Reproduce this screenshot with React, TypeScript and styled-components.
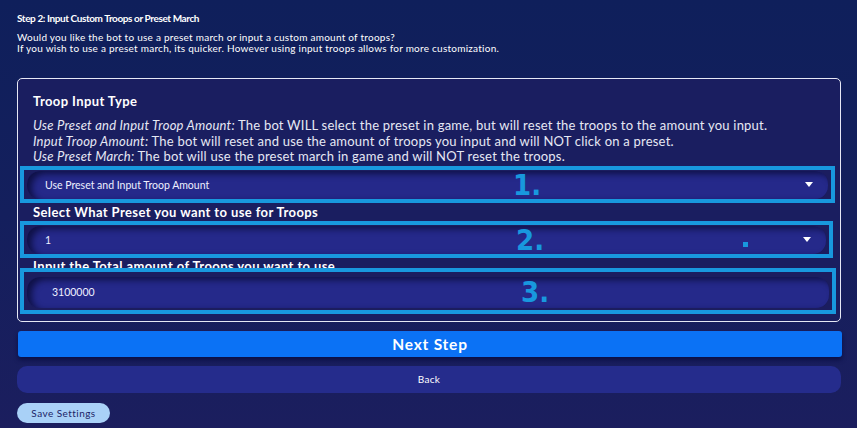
import React from "react";
import styled, { createGlobalStyle } from "styled-components";

const GlobalStyle = createGlobalStyle`
  html, body {
    margin: 0;
    padding: 0;
    height: 100%;
  }
  body {
    background: linear-gradient(180deg, #0f1f5b 0%, #141f5d 50%, #1b1e5e 100%);
    font-family: Lato, "DejaVu Sans", sans-serif;
    color: #ffffff;
  }
  #root {
    min-height: 428px;
  }
`;

const Page = styled.div`
  padding: 11px 16px 0 17px;
  width: 824px;
`;

const StepTitle = styled.div`
  font-size: 10px;
  font-weight: 700;
  line-height: 14px;
  letter-spacing: -0.4px;
  margin-bottom: 7px;
`;

const Intro = styled.div`
  font-size: 10px;
  line-height: 11px;
  letter-spacing: 0.25px;
  margin-bottom: 24px;
`;

const Panel = styled.div`
  border: 1px solid #e6e8f5;
  border-radius: 5px;
  background: #1a1e60;
  padding: 14px 14px 7px 15px;
  display: flex;
  flex-direction: column;
`;

const Heading = styled.div<{ $gap?: number }>`
  font-size: 13px;
  font-weight: 700;
  line-height: 16px;
  letter-spacing: 0.4px;
  margin-top: ${(p) => p.$gap ?? 0}px;
  position: relative;
  z-index: 0;
`;

const Desc = styled.div`
  font-size: 13px;
  line-height: 15.5px;
  letter-spacing: 0.22px;
  color: #e6e8f4;
  margin-top: 9px;
  em {
    font-style: italic;
  }
`;

const Highlight = styled.div<{ $top: number; $right: number; $padTop?: number }>`
  position: relative;
  z-index: 1;
  margin: ${(p) => p.$top}px ${(p) => p.$right}px 0 -13px;
  border: 4px solid #1898de;
  background: #1b1d5f;
  padding: ${(p) => p.$padTop ?? 1}px 3px ${(p) => (p.$padTop ? 2 : 0)}px 3px;
`;

const Field = styled.div<{ $h?: number; $pad?: number }>`
  height: ${(p) => p.$h ?? 28}px;
  border-radius: 13px;
  background: #25298a;
  box-shadow: inset 5px 3px 6px rgba(8, 10, 50, 0.75);
  display: flex;
  align-items: center;
  padding: 0 15px 0 ${(p) => p.$pad ?? 18}px;
  font-size: 10.5px;
  letter-spacing: 0;
  color: #eef0ff;
`;

const FieldText = styled.span`
  flex: 1;
`;

const Caret = styled.span`
  width: 0;
  height: 0;
  border-left: 4px solid transparent;
  border-right: 4px solid transparent;
  border-top: 5px solid #ffffff;
`;

const Marker = styled.span<{ $left: number }>`
  position: absolute;
  left: ${(p) => p.$left}px;
  top: 50%;
  transform: translateY(-46%);
  font-size: 29px;
  font-weight: 700;
  color: #1898de;
  font-family: "DejaVu Sans Condensed", "DejaVu Sans", sans-serif;
  pointer-events: none;
`;

const Dot = styled.span`
  position: absolute;
  left: 719px;
  top: 17px;
  width: 5px;
  height: 5px;
  background: #1898de;
`;

const Buttons = styled.div`
  display: flex;
  flex-direction: column;
  gap: 9px;
  margin-top: 9px;
`;

const NextButton = styled.button`
  height: 26px;
  margin-left: 1px;
  margin-right: -1px;
  border: none;
  border-radius: 3px;
  background: #0b72f5;
  color: #ffffff;
  font-family: Lato, "DejaVu Sans", sans-serif;
  font-size: 15.5px;
  font-weight: 700;
  letter-spacing: 0.8px;
  box-shadow: 0 3px 4px rgba(6, 10, 60, 0.7);
`;

const BackButton = styled.button`
  height: 27px;
  border: none;
  border-radius: 10px;
  background: #252c8c;
  color: #ffffff;
  font-family: Lato, "DejaVu Sans", sans-serif;
  font-size: 10px;
  letter-spacing: 0.3px;
`;

const SaveButton = styled.button`
  align-self: flex-start;
  width: 93px;
  height: 20px;
  border: none;
  border-radius: 10px;
  background: #a9d1f7;
  color: #1b2466;
  font-family: Lato, "DejaVu Sans", sans-serif;
  font-size: 10px;
  letter-spacing: 0.45px;
  margin-top: 1px;
`;

export default function App() {
  return (
    <>
      <GlobalStyle />
      <Page>
        <StepTitle>Step 2: Input Custom Troops or Preset March</StepTitle>
        <Intro>
          Would you like the bot to use a preset march or input a custom amount of troops?
          <br />
          If you wish to use a preset march, its quicker. However using input troops allows for more customization.
        </Intro>
        <Panel>
          <Heading>Troop Input Type</Heading>
          <Desc>
            <em>Use Preset and Input Troop Amount:</em> The bot WILL select the preset in game, but will reset the troops to the amount you input.
            <br />
            <em>Input Troop Amount:</em> The bot will reset and use the amount of troops you input and will NOT click on a preset.
            <br />
            <em>Use Preset March:</em> The bot will use the preset march in game and will NOT reset the troops.
          </Desc>
          <Highlight $top={1} $right={-9}>
            <Field>
              <FieldText>Use Preset and Input Troop Amount</FieldText>
              <Caret />
            </Field>
            <Marker $left={489}>1.</Marker>
          </Highlight>
          <Heading $gap={1}>Select What Preset you want to use for Troops</Heading>
          <Highlight $top={1} $right={-7}>
            <Field>
              <FieldText>1</FieldText>
              <Caret />
            </Field>
            <Marker $left={492}>2.</Marker>
            <Dot />
          </Highlight>
          <Heading $gap={0}>Input the Total amount of Troops you want to use</Heading>
          <Highlight $top={-6} $right={-10} $padTop={5}>
            <Field $h={31} $pad={25}>
              <FieldText>3100000</FieldText>
            </Field>
            <Marker $left={497}>3.</Marker>
          </Highlight>
        </Panel>
        <Buttons>
          <NextButton>Next Step</NextButton>
          <BackButton>Back</BackButton>
          <SaveButton>Save Settings</SaveButton>
        </Buttons>
      </Page>
    </>
  );
}
